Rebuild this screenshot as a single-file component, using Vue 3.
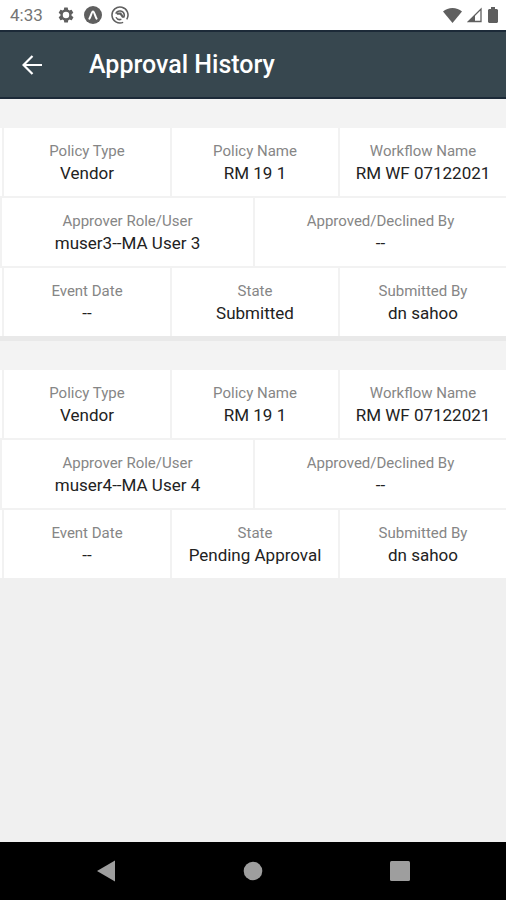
<script setup>
const approvals = [
  { approver: 'muser3--MA User 3', state: 'Submitted' },
  { approver: 'muser4--MA User 4', state: 'Pending Approval' },
].map(({ approver, state }) => [
  [
    { label: 'Policy Type', value: 'Vendor' },
    { label: 'Policy Name', value: 'RM 19 1' },
    { label: 'Workflow Name', value: 'RM WF 07122021' },
  ],
  [
    { label: 'Approver Role/User', value: approver },
    { label: 'Approved/Declined By', value: '--' },
  ],
  [
    { label: 'Event Date', value: '--' },
    { label: 'State', value: state },
    { label: 'Submitted By', value: 'dn sahoo' },
  ],
])
</script>

<template>
  <div class="screen">
    <div class="status">
      <span class="clock">4:33</span>
      <svg class="glyph" viewBox="0 0 24 24" aria-hidden="true">
        <path fill-rule="evenodd" d="M19.4 13a7.500 7.500 0 0 0 0-2l2.100-1.700a.5.5 0 0 0 .1-.6l-2-3.500a.5.5 0 0 0-.6-.2l-2.500 1a7.500 7.500 0 0 0-1.700-1l-.4-2.600A.5.5 0 0 0 14 2h-4a.5.5 0 0 0-.5.400L9.200 5a7.500 7.500 0 0 0-1.700 1L5 5a.5.5 0 0 0-.6.200l-2 3.500a.5.5 0 0 0 .1.600L4.600 11a7.500 7.500 0 0 0 0 2l-2.100 1.700a.5.5 0 0 0-.1.600l2 3.500a.5.5 0 0 0 .6.200l2.500-1a7.500 7.500 0 0 0 1.700 1l.4 2.600a.5.5 0 0 0 .5.400h4a.5.5 0 0 0 .5-.4l.4-2.600a7.500 7.500 0 0 0 1.700-1l2.500 1a.5.5 0 0 0 .6-.2l2-3.500a.5.5 0 0 0-.1-.6zM12 16.300a4.300 4.300 0 1 1 0-8.600 4.300 4.300 0 0 1 0 8.600z" />
      </svg>
      <svg class="glyph" viewBox="0 0 20 20" aria-hidden="true">
        <circle cx="10" cy="10" r="10" />
        <path d="M6 14C7.500 12 8.500 6 10 6s2.500 6 4 8" fill="none" stroke="#fff" stroke-width="2.200" stroke-linecap="round" />
      </svg>
      <svg class="glyph" viewBox="0 0 20 20" aria-hidden="true">
        <g fill="none" stroke="#5f5f5f" stroke-width="1.700">
          <path d="M13.500 18.200A8.900 8.900 0 1 1 17.500 14.800" />
          <path d="M5.300 8.500a5 5 0 0 1 9.500 1.500 5 5 0 0 1-1 3M11.500 14.800a5 5 0 0 1-6-2.300" />
          <path d="M6.500 8.500h4l3 4" stroke-width="2.400" />
        </g>
      </svg>
      <div class="signals">
        <svg width="19" height="16" viewBox="0 0 19 16" aria-hidden="true">
          <path d="M0 4.500C5-.2 14-.2 19 4.500L9.500 16z" />
        </svg>
        <svg width="16" height="16" viewBox="0 0 16 16" aria-hidden="true">
          <path d="M1.500 14.500L14 2v12.500z" fill="none" stroke="#5f5f5f" stroke-width="1.300" />
          <path d="M1 15l7-7v7z" />
        </svg>
        <svg width="10" height="16" viewBox="0 0 10 16" aria-hidden="true">
          <path d="M3 0h4v2h2l1 1v12l-1 1H1l-1-1V3l1-1h2z" />
        </svg>
      </div>
    </div>

    <header class="bar">
      <button class="back" type="button" aria-label="Back">
        <svg width="20" height="20" viewBox="0 0 20 20" aria-hidden="true">
          <path d="M20 10H1.500M10.500 1L1.500 10l9 9" fill="none" stroke="#fff" stroke-width="2.200" />
        </svg>
      </button>
      <h1>Approval History</h1>
    </header>

    <main class="list">
      <article v-for="(rows, i) in approvals" :key="i" class="card">
        <dl v-for="(row, r) in rows" :key="r" class="row" :class="row.length === 3 ? 'thirds' : 'halves'">
          <div v-for="field in row" :key="field.label" class="cell">
            <dt>{{ field.label }}</dt>
            <dd>{{ field.value }}</dd>
          </div>
        </dl>
      </article>
    </main>

    <nav class="system">
      <button type="button" aria-label="Back">
        <svg width="20" height="22" viewBox="0 0 20 22" aria-hidden="true"><path d="M1 11L19 .5v21z" /></svg>
      </button>
      <button type="button" aria-label="Home">
        <svg width="20" height="20" viewBox="0 0 20 20" aria-hidden="true"><circle cx="10" cy="10" r="9.300" /></svg>
      </button>
      <button type="button" aria-label="Recent apps">
        <svg width="20" height="20" viewBox="0 0 20 20" aria-hidden="true"><rect width="20" height="20" rx="1.500" /></svg>
      </button>
    </nav>
  </div>
</template>

<style>
body {
  margin: 0;
  background: #f0f0f0;
}
</style>

<style scoped>
.screen {
  display: flex;
  flex-direction: column;
  min-height: 100vh;
  font-family: Roboto, "Liberation Sans", sans-serif;
  background: #f0f0f0;
}

button {
  display: flex;
  align-items: center;
  justify-content: center;
  padding: 0;
  border: 0;
  background: none;
}

.status {
  display: flex;
  align-items: center;
  gap: 9px;
  box-sizing: border-box;
  height: 30px;
  padding: 0 8px 0 10px;
  background: #fff;
  fill: #5f5f5f;
}

.clock {
  margin-right: 5px;
  font-size: 17px;
  line-height: 20px;
  color: #757575;
}

.glyph {
  width: 18px;
  height: 18px;
}

.signals {
  display: flex;
  gap: 5px;
  margin-left: auto;
}

.bar {
  display: flex;
  align-items: center;
  gap: 36px;
  box-sizing: border-box;
  height: 69px;
  padding: 0 11px;
  border-top: 2px solid #1c2a38;
  border-bottom: 2px solid #1c2a38;
  background: #37474f;
}

.back {
  width: 42px;
  height: 42px;
}

h1 {
  margin: 0;
  font-size: 25px;
  font-weight: 500;
  line-height: 33px;
  color: #fff;
}

.list {
  flex: 1;
}

.card {
  padding-top: 29px;
  background: #f3f3f3;
}

.card:not(:last-child) {
  border-bottom: 5px solid #e9e9e9;
}

.row {
  display: grid;
  margin: 0;
  background: #fff;
}

.row + .row {
  border-top: 2px solid #f2f2f2;
}

.thirds {
  grid-template-columns: repeat(3, 1fr);
  padding-left: 2px;
}

.halves {
  grid-template-columns: repeat(2, 1fr);
}

.cell {
  padding: 12px 0;
  border-left: 2px solid #f2f2f2;
  text-align: center;
  line-height: 22px;
}

dt {
  font-size: 15px;
  color: #868686;
}

dd {
  margin: 0;
  font-size: 17px;
  color: #222;
}

.system {
  display: flex;
  justify-content: space-around;
  align-items: center;
  height: 58px;
  padding: 0 33px;
  background: #000;
  fill: #9e9e9e;
}

.system button {
  width: 48px;
  height: 48px;
  fill: inherit;
}
</style>
